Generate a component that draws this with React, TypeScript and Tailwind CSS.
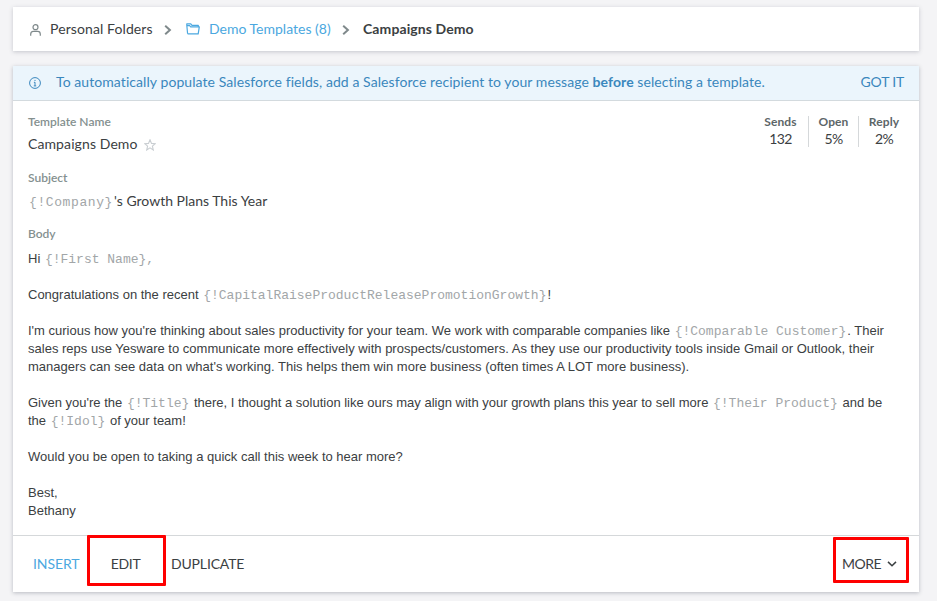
import React from "react";

type TextProps = { children: React.ReactNode };

function Token({ children }: TextProps) {
  return (
    <span className="mx-px font-['Liberation_Mono',monospace] text-[13px] leading-none text-[#a2a6a8]">
      {children}
    </span>
  );
}

function Label({ children }: TextProps) {
  return (
    <div className="h-4 text-[12px] leading-4 font-semibold text-[#84908f]">{children}</div>
  );
}

function Stat({ name, value, className }: { name: string; value: string; className: string }) {
  return (
    <div className={`h-[31px] text-center ${className}`}>
      <div className="-mt-px h-[13px] text-[12px] leading-[13px] font-bold tracking-[0.1px] text-[#5d6668]">{name}</div>
      <div className="h-[18px] pt-px text-[14px] leading-[19px] tracking-[-0.7px] text-[#3b4042]">{value}</div>
    </div>
  );
}

function Chevron({ className }: { className: string }) {
  return (
    <svg className={`mt-px ${className}`} width="8" height="10" viewBox="0 0 8 10" fill="none" stroke="#7f898b" strokeWidth="2">
      <path d="M1.2 0.8 5.9 5 1.2 9.2" />
    </svg>
  );
}

function Breadcrumb() {
  return (
    <nav className="flex h-11 items-center bg-white pl-[17px] text-[14px] whitespace-nowrap text-[#3b4042] shadow-[0_1px_4px_rgba(60,65,85,0.25)]">
      <svg className="mt-px" width="11" height="12" viewBox="0 0 11 12" fill="none" stroke="#7f898b" strokeWidth="1.2">
        <circle cx="5.5" cy="3.2" r="2.5" />
        <path d="M0.7 11.8V10.2Q0.7 7.4 3.3 7.4H7.7Q10.3 7.4 10.3 10.2V11.8" />
      </svg>
      <span className="ml-[9px] w-[104px] pb-0.5 tracking-[0.1px]">Personal Folders</span>
      <Chevron className="ml-[10px]" />
      <svg className="ml-[14px]" width="14" height="12" viewBox="0 0 14 12" fill="none" stroke="#4ba8e0" strokeWidth="1.2" strokeLinejoin="round">
        <path d="M1.6 10.8 0.8 2.2V0.8H4.8L6 2.3H12.3V3.8M1.6 10.8H12.2L13.3 3.8H4.5L3.8 2.7H0.9" />
      </svg>
      <span className="ml-[9px] w-[122px] pb-0.5 text-[#4ba8e0]">Demo Templates (8)</span>
      <Chevron className="ml-[11px]" />
      <span className="ml-[13px] pb-0.5 font-bold tracking-[0.1px]">Campaigns Demo</span>
    </nav>
  );
}

function Banner() {
  return (
    <div className="flex h-[35px] items-center border-b border-[#d3dade] bg-[#ebf5fc] pr-[15px] pb-px pl-4 text-[14px] whitespace-nowrap text-[#3a87bd]">
      <svg width="12" height="12" viewBox="0 0 12 12" fill="none" stroke="#3a87bd" strokeWidth="1">
        <circle cx="6" cy="6" r="5.4" />
        <path d="M6 5.2V8.8M4.9 5.3H6M4.8 8.9H7.2M6 2.9V4" />
      </svg>
      <span className="ml-[15px] pb-0.5 tracking-[0.073px]">
        To automatically populate Salesforce fields, add a Salesforce recipient to your message{" "}
        <b>before</b> selecting a template.
      </span>
      <button className="ml-auto pb-0.5 tracking-[-0.2px]">GOT IT</button>
    </div>
  );
}

function Message() {
  return (
    <div className="mt-2 font-['Liberation_Sans',Arial,sans-serif] text-[13px] leading-[18px] whitespace-nowrap text-[#3b4042]">
      <p className="h-9">Hi <Token>{"{!First Name},"}</Token></p>
      <p className="h-9">
        Congratulations on the recent <Token>{"{!CapitalRaiseProductReleasePromotionGrowth}"}</Token>!
      </p>
      <p className="h-[72px]">
        I'm curious how you're thinking about sales productivity for your team. We work with comparable companies like{" "}
        <Token>{"{!Comparable Customer}"}</Token>. Their<br />
        <span className="tracking-[0.007px]">
          sales reps use Yesware to communicate more effectively with prospects/customers. As they use our productivity tools inside Gmail or Outlook, their
        </span>
        <br />
        <span className="tracking-[0.015px]">
          managers can see data on what's working. This helps them win more business (often times A LOT more business).
        </span>
      </p>
      <p className="h-[54px]">
        Given you're the <Token>{"{!Title}"}</Token> there, I thought a solution like ours may align with your growth plans this year to sell more{" "}
        <Token>{"{!Their Product}"}</Token> and be<br />
        the <Token>{"{!Idol}"}</Token> of your team!
      </p>
      <p className="h-9">Would you be open to taking a quick call this week to hear more?</p>
      <p>Best,<br />Bethany</p>
    </div>
  );
}

function Actions() {
  return (
    <footer className="flex h-[57px] items-start border-t border-[#d5d8da] pr-[10px] pl-5 text-[14px] leading-5 whitespace-nowrap text-[#3b4042]">
      <button className="mt-[18px] w-[54px] text-left tracking-[-0.1px] text-[#4ba8e0]">INSERT</button>
      <button className="-mt-px h-[51px] w-[79px] rounded-[1px] border-[3px] border-[#fe0000] pt-[7px] pr-[2px] tracking-[-0.3px]">EDIT</button>
      <button className="mt-[18px] ml-[5px] tracking-[-0.16px]">DUPLICATE</button>
      <button className="mt-px ml-auto flex h-[46px] w-[76px] items-center rounded-[1px] border-[3px] border-[#fe0000] pt-[7px] pl-[6px]">
        <span className="w-[41px] text-left tracking-[-0.5px]">MORE</span>
        <svg className="ml-1" width="10" height="6" viewBox="0 0 10 6" fill="none" stroke="#3b4042" strokeWidth="1.5">
          <path d="M1 0.9 5 4.7 9 0.9" />
        </svg>
      </button>
    </footer>
  );
}

export default function App() {
  return (
    <main className="h-[601px] w-[937px] overflow-hidden bg-[#f4f4f6] pt-[7px] pr-[18px] pl-[13px] font-['Lato',sans-serif]">
      <Breadcrumb />
      <article className="mt-[15px] h-[526px] bg-white shadow-[0_1px_4px_rgba(60,65,85,0.32)]">
        <Banner />
        <section className="flex h-[434px] justify-between pl-[15px]">
          <div className="pt-[13px]">
            <Label>Template Name</Label>
            <div className="mt-[5px] flex h-5 items-center text-[14px] text-[#3b4042]">
              <span className="w-[110px] pb-[3px] tracking-[0.1px] whitespace-nowrap">Campaigns Demo</span>
              <svg className="ml-[6px]" width="12" height="12" viewBox="0 0 12 12" fill="none" stroke="#c9ced2" strokeWidth="1.1">
                <path d="M6 .8 7.5 4.4 11.3 4.7 8.4 7.1 9.3 11 6 8.9 2.7 11 3.6 7.1 .7 4.7 4.5 4.4Z" />
              </svg>
            </div>
            <div className="mt-[15px]"><Label>Subject</Label></div>
            <div className="mt-[5px] flex h-5 items-center text-[14px] whitespace-nowrap text-[#3b4042]">
              <span className="w-[86px] pt-[3px] pl-px font-['Liberation_Mono',monospace] text-[13px] tracking-[0.6px] text-[#a2a6a8]">{"{!Company}"}</span>
              <span className="pb-0.5">'s Growth Plans This Year</span>
            </div>
            <div className="mt-[15px]"><Label>Body</Label></div>
            <div className="w-[870px]"><Message /></div>
          </div>
          <div className="-ml-[200px] flex shrink-0 items-start pt-[15px] pr-[10px]">
            <Stat name="Sends" value="132" className="w-[55px]" />
            <Stat name="Open" value="5%" className="w-[50px] border-l border-[#d5d8da]" />
            <Stat name="Reply" value="2%" className="w-[51px] border-l border-[#d5d8da]" />
          </div>
        </section>
        <Actions />
      </article>
    </main>
  );
}
